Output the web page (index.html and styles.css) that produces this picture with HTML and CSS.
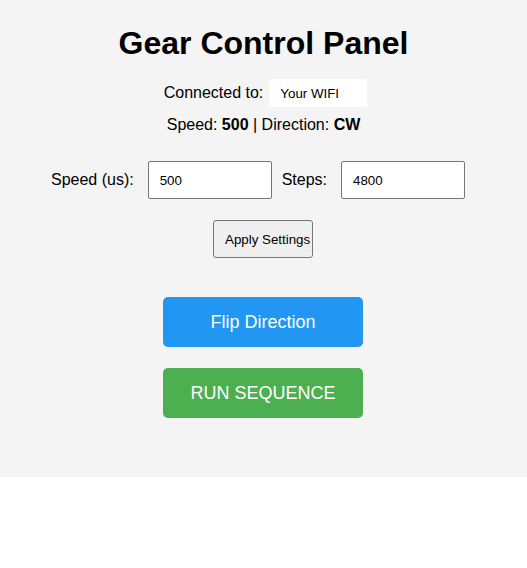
FILE: index.html
```html
<!DOCTYPE html>
<html lang="en">
<head>
<meta charset="utf-8">
<title>Gear Control Panel</title>
<link rel="stylesheet" href="styles.css">
</head>
<body>
<div class="panel">
  <h1 class="title">Gear Control Panel</h1>
  <div class="row conn"><span class="conn-label">Connected to:</span><span class="wifi">Your WIFI</span></div>
  <div class="row status">Speed: <b>500</b> | Direction: <b>CW</b></div>
  <div class="row settings"><label class="lbl lbl-speed">Speed (us):</label><input class="field" type="text" value="500"><label class="lbl lbl-steps">Steps:</label><input class="field" type="text" value="4800"></div>
  <div class="row apply-row"><button class="apply">Apply Settings</button></div>
  <div class="row big-row"><button class="big flip">Flip Direction</button></div>
  <div class="row big-row run-row"><button class="big run">RUN SEQUENCE</button></div>
</div>
</body>
</html>
```
FILE: styles.css
```css
html { background: #ffffff; }
body {
  margin: 0;
  font-family: "Liberation Sans", Arial, sans-serif;
  color: #000;
}
.panel {
  background: #f4f4f4;
  padding: 25px 0 59px;
  text-align: center;
}
.title {
  margin: 0;
  font-size: 32px;
  line-height: 37px;
  font-weight: bold;
}
.row { font-size: 16px; }
.conn {
  margin-top: 17px;
  display: flex;
  justify-content: center;
  align-items: center;
  gap: 6px;
  padding-left: 4px;
  height: 28px;
}
.wifi {
  width: 98px;
  height: 28px;
  box-sizing: border-box;
  padding-left: 11px;
  background: #fff;
  font-size: 13.33px;
  line-height: 30px;
  text-align: left;
}
.status {
  margin-top: 9px;
  line-height: 18px;
}
.settings {
  margin-top: 27px;
  display: flex;
  justify-content: center;
  align-items: center;
  padding-right: 11px;
  height: 38px;
}
.lbl-speed { margin-right: 14px; }
.lbl-steps { margin: 0 14px 0 10px; }
.field {
  width: 124px;
  height: 38px;
  box-sizing: border-box;
  margin: 0;
  padding: 0 0 0 11px;
  border: 1px solid #767676;
  border-radius: 2px;
  background: #fff;
  font-family: "Liberation Sans", Arial, sans-serif;
  font-size: 13.33px;
}
.apply-row { margin-top: 21px; height: 38px; }
.apply {
  width: 100px;
  height: 38px;
  box-sizing: border-box;
  margin-right: 1px;
  padding: 0 0 0 11px;
  border: 1px solid #767676;
  border-radius: 3px;
  background: #efefef;
  font-family: "Liberation Sans", Arial, sans-serif;
  font-size: 13.33px;
  text-align: left;
  white-space: nowrap;
  overflow: hidden;
  color: #000;
}
.big-row { margin-top: 39px; height: 50px; }
.run-row { margin-top: 21px; }
.big {
  width: 200px;
  height: 50px;
  border: 0;
  border-radius: 5px;
  color: #fff;
  font-family: "Liberation Sans", Arial, sans-serif;
  font-size: 18px;
  margin-right: 1px;
}
.flip { background: #2196f3; }
.run { background: #4caf50; }
```
